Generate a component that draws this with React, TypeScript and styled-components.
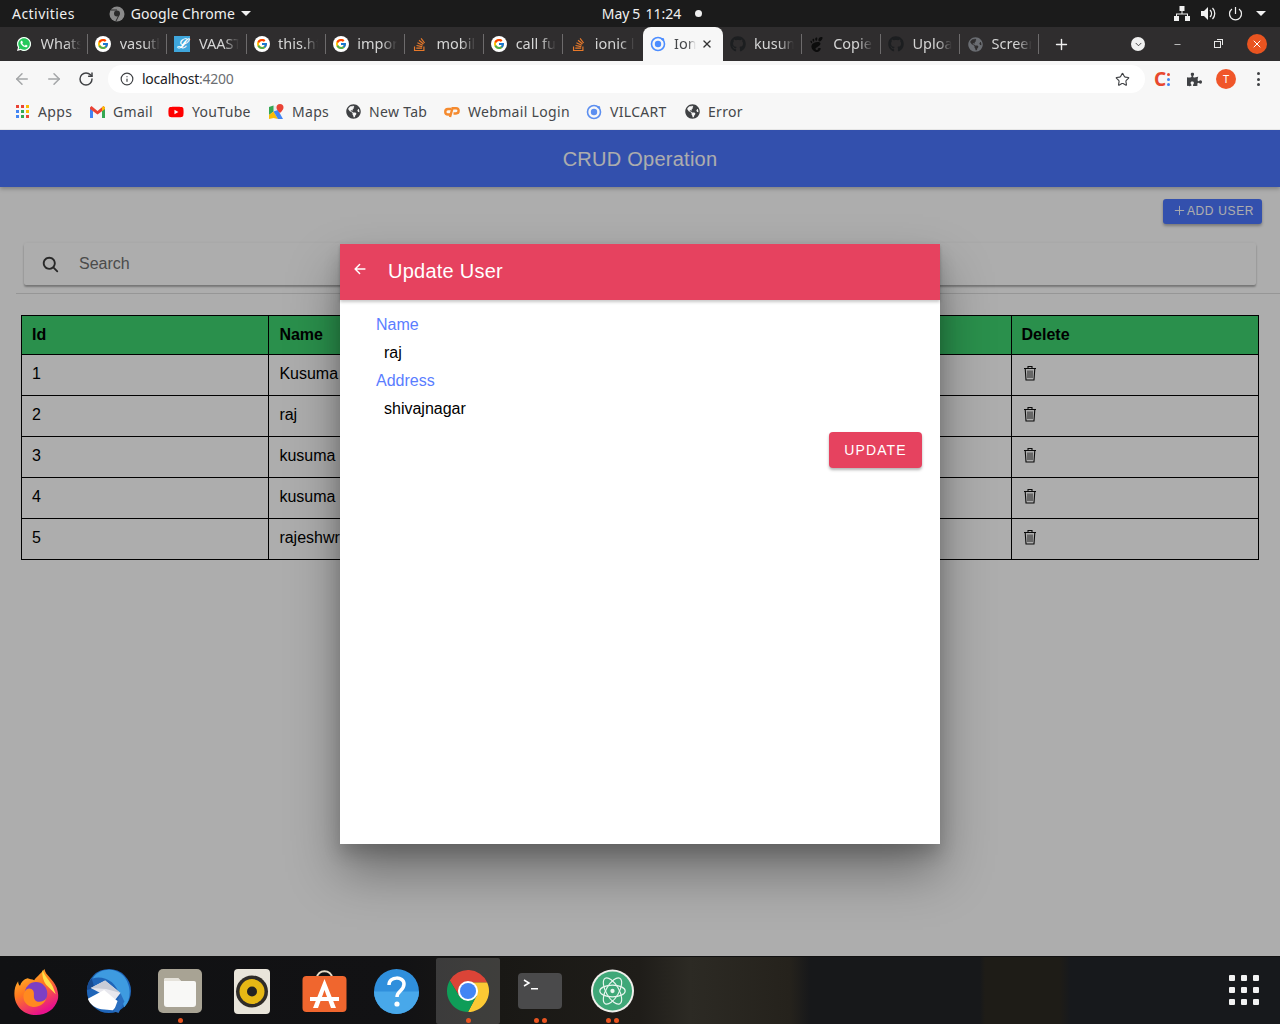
import React from "react";
import styled, { createGlobalStyle } from "styled-components";
import { FcGoogle } from "react-icons/fc";
import { FaStackOverflow, FaGithub, FaGlobeAmericas, FaPuzzlePiece, FaYoutube, FaWhatsapp } from "react-icons/fa";
import { SiGnome } from "react-icons/si";
import { IoArrowBack, IoSearch, IoAdd, IoClose, IoChevronDown } from "react-icons/io5";
import { ArrowLeft, ArrowRight, RotateCw, Info, Star, Plus, X, Minus } from "lucide-react";

const Global = createGlobalStyle`
  html, body { margin: 0; padding: 0; height: 100%; overflow: hidden; }
  body { font-family: "Liberation Sans", Arial, sans-serif; background: #fff; }
  * { box-sizing: border-box; }
`;

const UI = `"Noto Sans", "Open Sans", sans-serif`;

const Shell = styled.div`
  width: 1280px; height: 1024px; display: flex; flex-direction: column; overflow: hidden;
`;

/* ---------- GNOME top bar ---------- */
const TopBar = styled.div`
  height: 27px; background: #1b1b1b; color: #f0f0f0; display: grid;
  grid-template-columns: 1fr auto 1fr; align-items: center; padding: 0 12px;
  font: 14px/27px ${UI}; flex: none;
`;
const TopLeft = styled.div` display: flex; align-items: center; `;
const Activities = styled.span` letter-spacing: 0.45px; `;
const AppName = styled.div` display: flex; align-items: center; gap: 6px; margin-left: 34px; letter-spacing: 0.05px; `;
const TopCenter = styled.div` display: flex; align-items: center; gap: 6px; padding-left: 24px; `;
const DateText = styled.span` word-spacing: -1px; `;
const RecDot = styled.span` width: 7px; height: 7px; border-radius: 50%; background: #f0f0f0; margin-left: 8px; `;
const TopRight = styled.div` display: flex; justify-content: flex-end; align-items: center; gap: 11px; padding-right: 2px; `;
const Caret = styled.span`
  width: 0; height: 0; border-left: 5px solid transparent; border-right: 5px solid transparent;
  border-top: 5px solid #f0f0f0; margin-left: ${p => p.$ml ?? 0}px;
`;

/* ---------- Chrome tab strip ---------- */
const TabStrip = styled.div`
  height: 34px; background: #2f2d2e; display: flex; align-items: stretch; padding-left: 9px; flex: none;
  font: 14.5px/32px ${UI};
`;
const Tab = styled.div`
  width: ${p => (p.$active ? 80 : 79.2)}px; position: relative; display: flex; align-items: center;
  padding-left: 7px; gap: 8.5px; color: ${p => (p.$active ? "#45474a" : "#d5d5d5")};
  background: ${p => (p.$active ? "#f7f7f7" : "transparent")};
  border-radius: ${p => (p.$active ? "8px 8px 0 0" : "0")};
  &::after {
    content: ""; position: absolute; right: 0; top: 7px; height: 20px; width: 1px;
    background: ${p => (p.$sep ? "#6d6b6c" : "transparent")};
  }
`;
const TabIcon = styled.span`
  width: 16px; height: 16px; flex: none; display: flex; align-items: center; justify-content: center;
  border-radius: ${p => (p.$round ? "50%" : "0")}; background: ${p => p.$bg ?? "transparent"};
  color: ${p => p.$fg ?? "inherit"};
`;
const TabTitle = styled.span`
  flex: none; width: ${p => p.$w ?? 40}px; height: 32px; overflow: hidden; white-space: nowrap; margin-top: -2px;
  -webkit-mask-image: linear-gradient(90deg, #000 62%, transparent 100%);
  mask-image: linear-gradient(90deg, #000 62%, transparent 100%);
`;
const TabClose = styled.span` position: absolute; right: 9px; top: 10px; display: flex; color: #333; `;
const NewTab = styled.div` width: 44px; display: flex; align-items: center; justify-content: center; color: #f0f0f0; `;
const WinControls = styled.div` display: flex; align-items: center; margin-left: auto; padding-right: 3px; `;
const WinBtn = styled.div` width: 40px; display: flex; justify-content: center; align-items: center; color: #e8e8e8; `;
const CloseDot = styled.span`
  width: 20px; height: 20px; border-radius: 50%; background: #e95420; color: #fff;
  display: flex; align-items: center; justify-content: center;
`;
const ProfileDrop = styled.span`
  width: 14px; height: 14px; border-radius: 50%; background: #f0f0f0; display: flex; align-items: center; justify-content: center; margin-left: 2px;
`;
const RestoreBox = styled.span`
  width: 7px; height: 7px; border: 1px solid #e8e8e8; position: relative; display: block;
  &::after { content: ""; position: absolute; top: -3px; right: -3px; width: 5px; height: 5px; border-top: 1px solid #e8e8e8; border-right: 1px solid #e8e8e8; }
`;

/* ---------- Chrome toolbar ---------- */
const Toolbar = styled.div`
  height: 34px; background: #f7f7f7; display: flex; align-items: center; padding: 2px 0 0 6px; flex: none;
`;
const NavBtn = styled.div`
  width: 32px; display: flex; justify-content: center; color: ${p => (p.$dim ? "#a4a6a8" : "#3f4144")};
`;
const Omnibox = styled.div`
  width: 1037px; height: 28px; margin-left: 6px; border-radius: 14px; background: #fff; display: flex; align-items: center;
  padding: 0 15.5px 0 12px; font: 14px/28px ${UI}; letter-spacing: -0.24px; color: #202124;
`;
const Host = styled.span` margin-left: 8px; `;
const Port = styled.span` color: #6b6e72; `;
const OmniStar = styled.span` margin-left: auto; display: flex; color: #3f4144; `;
const ExtArea = styled.div` display: flex; align-items: center; margin-left: 1px; `;
const ExtBtn = styled.div` width: 32px; display: flex; justify-content: center; align-items: center; color: #3f4144; `;
const Avatar = styled.span`
  width: 20px; height: 20px; border-radius: 50%; background: #f0562a; color: #fff; font: 11px/20px ${UI}; text-align: center;
`;
const CIcon = styled.span`
  color: #e8482f; font: bold 19px/20px ${UI}; display: flex; align-items: center; gap: 1px;
`;
const CDots = styled.span` display: flex; flex-direction: column; gap: 2px; `;
const CDot = styled.i` width: 3px; height: 3px; display: block; border-radius: 50%; background: ${p => p.$c}; `;
const Kebab = styled.span` display: flex; flex-direction: column; gap: 2.5px; `;
const KebabDot = styled.i` display: block; width: 3px; height: 3px; border-radius: 50%; background: #3f4144; `;

/* ---------- Bookmarks ---------- */
const Bookmarks = styled.div`
  height: 35px; background: #f7f7f7; display: flex; align-items: center; padding-left: 14px; flex: none;
  font: 14px/35px ${UI}; letter-spacing: 0.32px; color: #45474a; border-bottom: 1px solid #e6e6e6; padding-bottom: 1px;
`;
const Bookmark = styled.div`
  width: ${p => p.$w}px; display: flex; align-items: center; gap: 8px; white-space: nowrap; flex: none;
`;
const BmIcon = styled.span` width: 16px; height: 16px; display: flex; align-items: center; justify-content: center; flex: none; color: ${p => p.$fg ?? "#3f4144"}; `;
const AppsGrid = styled.span` display: grid; grid-template-columns: repeat(3, 3px); gap: 2px; `;
const AppsDot = styled.i` display: block; width: 3px; height: 3px; background: ${p => p.$c}; `;

/* ---------- Page ---------- */
const Page = styled.div` flex: 1; position: relative; background: #fff; overflow: hidden; `;
const PageHeader = styled.header`
  height: 57px; background: #4c77ff; color: #fff; display: flex; align-items: center; justify-content: center; padding-top: 2px;
  font-size: 20px; letter-spacing: .25px; box-shadow: 0 2px 4px rgba(0,0,0,.25);
`;
const ActionRow = styled.div` display: flex; justify-content: flex-end; padding: 12px 18px 0 0; `;
const AddButton = styled.div`
  width: 99px; height: 25px; border-radius: 3px; background: #4c77ff; color: #fff; display: flex; align-items: center; justify-content: center;
  font-size: 12px; letter-spacing: .65px; box-shadow: 0 2px 3px rgba(0,0,0,.3); padding: 0 0 2px 1px;
`;
const SearchBar = styled.div`
  height: 42px; margin: 19px 24px 0; border-radius: 2px; background: #fff; display: flex; align-items: center; padding-left: 17px; gap: 19px;
  color: #6f6f6f; font-size: 16px; box-shadow: 0 2px 2px rgba(0,0,0,.3), 0 0 3px rgba(0,0,0,.06);
`;
const Divider = styled.hr` margin: 8px 0 0 16px; height: 1px; border: 0; background: #dedede; `;
const Table = styled.table`
  margin: 21px 0 0 21px; width: 1238px; table-layout: fixed; border-collapse: collapse; font-size: 16px; color: #000;
`;
const Th = styled.th`
  height: 39px; background: #3fd470; border: 1px solid #000; padding: 0 10px; text-align: left; font-weight: 700;
`;
const Td = styled.td` height: 41px; border: 1px solid #000; padding: 0 10px 2px; text-align: left; `;
const TrashBtn = styled.span` display: inline-flex; padding: 1px 0 0 1px; `;

const Backdrop = styled.div`
  position: absolute; inset: 0; background: rgba(0,0,0,.32); display: flex; align-items: center; justify-content: center; padding-top: 2px;
`;
const Modal = styled.div`
  width: 600px; height: 600px; background: #fff; display: flex; flex-direction: column;
  box-shadow: 0 28px 48px rgba(0,0,0,.36), 0 10px 16px rgba(0,0,0,.16);
`;
const ModalHeader = styled.div`
  height: 56px; background: #e6425f; color: #fff; display: flex; align-items: center; padding: 0 0 2px 12px;
  font-size: 20px; letter-spacing: .25px; box-shadow: 0 2px 3px rgba(0,0,0,.22); flex: none;
`;
const BackBtn = styled.span` width: 36px; display: flex; margin-top: -5px; `;
const ModalBody = styled.div` padding: 11px 18px 0 36px; display: flex; flex-direction: column; `;
const Label = styled.div` height: 28px; line-height: 28px; color: #5a7dff; font-size: 16px; `;
const Value = styled.div` height: 28px; line-height: 28px; padding-left: 8px; color: #000; font-size: 16px; `;
const UpdateButton = styled.div`
  width: 93px; height: 36px; margin: 9px 0 0 auto; border-radius: 4px; background: #e6425f; color: #fff; display: flex; align-items: center; justify-content: center;
  font-size: 14px; letter-spacing: 1.1px; box-shadow: 0 2px 3px rgba(0,0,0,.3);
`;

/* ---------- Dock ---------- */
const Dock = styled.div`
  height: 68px; flex: none; display: flex; align-items: flex-start; padding-top: 1px;
  border-top: 1px solid #111;
  background: linear-gradient(90deg, #101113 0, #121214 400px, #191815 500px, #1f1d19 640px, #2c2a24 690px, #25221c 790px, #17181a 810px, #17181a 980px, #1e1c17 985px, #1e1c17 1060px, #17191c 1070px, #17191c 100%);
`;
const DockItem = styled.div`
  width: 72px; height: 66px; position: relative; display: flex; align-items: center; justify-content: center; flex: none;
  &::before {
    content: ""; position: absolute; left: 4px; right: 4px; top: 0; bottom: 0; border-radius: 2px;
    background: ${p => (p.$active ? "rgba(255,255,255,.17)" : "transparent")};
  }
  & > svg { position: relative; }
`;
const Running = styled.div` position: absolute; bottom: 1px; left: 0; right: 0; display: flex; justify-content: center; gap: 3px; `;
const RunDot = styled.i` width: 5px; height: 5px; border-radius: 50%; background: #e95420; display: block; `;
const GridBtn = styled.div`
  margin: 17px 21px 0 auto; display: grid; grid-template-columns: repeat(3, 6px); gap: 6px;
`;
const GridDot = styled.i` width: 6px; height: 6px; border-radius: 1px; background: #f2f2f2; display: block; `;

/* ---------- Drawn icons ---------- */
const Trash = () => (
  <svg width="14" height="16" viewBox="0 0 14 16" fill="none" stroke="#111" strokeWidth="1.100">
    <path d="M1 3.500h12M5 3.500V1.500h4v2" />
    <path d="M2.200 3.500 3 15h8l.8-11.500" />
    <path d="M5 5.500v7.500M7 5.500v7.500M9 5.500v7.500" stroke="#444" />
  </svg>
);
const CPanel = () => (
  <svg width="16" height="12" viewBox="0 0 16 12" fill="none" stroke="#f58a2e" strokeWidth="2.400">
    <path d="M7 3H4a2.500 2.500 0 0 0 0 5.500h2" />
    <path d="M6 11 8.500 2.200H12a2.500 2.500 0 0 1 0 5.300H9.500" />
  </svg>
);
const ChromeLogo = ({ size = 46 }: { size?: number }) => (
  <svg width={size} height={size} viewBox="0 0 48 48">
    <path d="M24 15H44A22 22 0 0 0 5 13L16 31Z" fill="#db4437" />
    <path d="M44 15A22 22 0 0 1 24 46L33 29 24 15Z" fill="#fcc934" />
    <path d="M5 13A22 22 0 0 0 24 46L33 29 16 31Z" fill="#0f9d58" />
    <circle cx="24" cy="24" r="10.500" fill="#fff" />
    <circle cx="24" cy="24" r="8.400" fill="#4285f4" />
  </svg>
);
const GreyChrome = () => (
  <svg width="16" height="16" viewBox="0 0 16 16">
    <circle cx="8" cy="8" r="7.500" fill="#8a8a8a" />
    <circle cx="8" cy="7.500" r="3" fill="#2b2b2b" />
    <path d="M9.500 10 7 15M2 4h6" stroke="#2b2b2b" strokeWidth="1" />
  </svg>
);
const Network = () => (
  <svg width="16" height="15" viewBox="0 0 16 15" fill="#f0f0f0">
    <rect x="5.500" y="0" width="5" height="5" />
    <rect x="0" y="10" width="5" height="5" />
    <rect x="11" y="10" width="5" height="5" />
    <path d="M7.500 5h1v2.500H14V10h-1V8.500H3V10H2V7.500h5.500z" />
  </svg>
);
const Volume = () => (
  <svg width="16" height="15" viewBox="0 0 16 15" fill="#f0f0f0">
    <path d="M0 5h3l4-4v13l-4-4H0z" />
    <path d="M9 4c2 2 2 5 0 7M11.500 2c3 3 3 8 0 11" stroke="#f0f0f0" strokeWidth="1.300" fill="none" />
  </svg>
);
const Power = () => (
  <svg width="15" height="15" viewBox="0 0 15 15" fill="none" stroke="#f0f0f0" strokeWidth="1.200">
    <path d="M7.500 1v7" />
    <path d="M4 3a6 6 0 1 0 7 0" />
  </svg>
);
const Gmail = () => (
  <svg width="15" height="12" viewBox="0 0 15 12">
    <path d="M0 2v10h3V5z" fill="#4285f4" />
    <path d="M15 2v10h-3V5z" fill="#34a853" />
    <path d="M0 1.500 1.500 0 7.500 5 13.500 0 15 1.500V3L7.500 8.500 0 3z" fill="#ea4335" />
    <path d="M12 5 15 3V1.500L13.500 0 12 1.300z" fill="#fbbc04" />
  </svg>
);
const Maps = () => (
  <svg width="16" height="16" viewBox="0 0 16 16">
    <path d="M1 3 5.500 1.500 10 3l2 12-6.500-1L1 15z" fill="#e8eaed" />
    <path d="M1 3 5.500 1.500v6L1 11z" fill="#34a853" />
    <path d="M1 11 5.500 7.500 10 15 5.500 14 1 15z" fill="#fbbc04" />
    <path d="M5.500 7.500 10 6l5 9-5 0z" fill="#4285f4" />
    <path d="M12 0a3.500 3.500 0 0 0-3.500 3.500C8.500 6 12 9 12 9s3.500-3 3.500-5.500A3.500 3.500 0 0 0 12 0z" fill="#ea4335" />
  </svg>
);
const IonicMark = ({ color = "#4c8dff", size = 16 }: { color?: string; size?: number }) => (
  <svg width={size} height={size} viewBox="0 0 16 16" fill="none">
    <circle cx="8" cy="8" r="6.500" stroke={color} strokeWidth="1.600" />
    <circle cx="8" cy="8" r="3.200" fill={color} />
    <circle cx="12.800" cy="3.200" r="1.300" fill={color} />
  </svg>
);
const Firefox = () => (
  <svg width="46" height="47" viewBox="0 0 48 50">
    <defs>
      <linearGradient id="ff" x1="0" y1="0" x2="0.500" y2="1">
        <stop offset="0" stopColor="#ffcb2e" />
        <stop offset="0.500" stopColor="#ff7a1f" />
        <stop offset="1" stopColor="#e8128c" />
      </linearGradient>
    </defs>
    <path d="M33 1c1 7 9 10 13 20 2 6 2 10 1 13-3 10-12 16-23 16C11 50 1 41 1 27c0-4 1-9 4-13 0 3 1 4 2 5 1-4 4-7 8-8 2 1 5 1 7 2 2-3 6-6 11-12z" fill="url(#ff)" />
    <path d="M31 2c2 7 8 11 11 18l3 8-10-10c-3-4-5-10-4-16z" fill="#ffe14a" />
    <circle cx="24" cy="27" r="12" fill="#7d3fc4" />
    <path d="M12 25c2-4 7-4 9-1 2 4-1 8 3 11 3 2 9 1 11-3-2 8-12 12-19 8-5-3-7-10-4-15z" fill="#ff8a1f" />
  </svg>
);
const Thunderbird = () => (
  <svg width="48" height="48" viewBox="0 0 48 50">
    <circle cx="25" cy="25" r="23" fill="#1f65b8" />
    <path d="M8 12C14 2 30-1 40 9c8 9 9 24 1 33-3-8-6-20-13-26C22 11 14 10 8 12z" fill="#3e9be0" />
    <path d="M2 24c0-5 2-9 5-12l3 10z" fill="#174b91" />
    <path d="M6 22 21 14l16 13-6 8z" fill="#e8e8ee" />
    <path d="M3 33 20 24l12 10 5 3-8 8-12-1C11 43 5 39 3 33z" fill="#fff" />
    <path d="M6 22 21 14l16 13-15-4z" fill="#c9ccd6" />
    <path d="M37 27l4 9-6 12-5-2z" fill="#2a6fc0" />
  </svg>
);
const Files = () => (
  <svg width="44" height="44" viewBox="0 0 44 44">
    <rect x="0" y="0" width="44" height="44" rx="5" fill="#a8a394" />
    <path d="M6 11a2 2 0 0 1 2-2h12l3 3h13a2 2 0 0 1 2 2v21a3 3 0 0 1-3 3H9a3 3 0 0 1-3-3z" fill="#f8f8f6" />
    <path d="M6 11a2 2 0 0 1 2-2h12l3 3H6z" fill="#e5e2da" />
  </svg>
);
const Rhythmbox = () => (
  <svg width="36" height="45" viewBox="0 0 36 45">
    <rect width="36" height="45" rx="4" fill="#e9e5da" />
    <circle cx="18" cy="22.500" r="16" fill="#2f2c28" />
    <circle cx="18" cy="22.500" r="12.500" fill="#e6b815" />
    <circle cx="18" cy="22.500" r="5" fill="#222" />
  </svg>
);
const Software = () => (
  <svg width="45" height="42" viewBox="0 0 45 42">
    <path d="M15 8c0-9 15-9 15 0" fill="none" stroke="#e8dcc8" strokeWidth="2" />
    <rect x=".5" y="6" width="44" height="36" rx="4" fill="#f0662e" />
    <path d="M22.500 9 11 38h5l6.500-18L29 38h5z" fill="#fff" />
    <rect x="8" y="27" width="29" height="4" fill="#fff" />
  </svg>
);
const Help = () => (
  <svg width="45" height="45" viewBox="0 0 45 45">
    <circle cx="22.500" cy="22.500" r="22.500" fill="#2f8fdc" />
    <path d="M0 22.500a22.500 22.500 0 0 0 45 0z" fill="#48a8ea" />
    <path d="M15 16c0-9 15-9 15-1 0 7-7 7-7 13" fill="none" stroke="#fff" strokeWidth="3.500" />
    <circle cx="23" cy="35" r="2.600" fill="#fff" />
  </svg>
);
const Terminal = () => (
  <svg width="44" height="36" viewBox="0 0 44 36">
    <rect width="44" height="36" rx="4" fill="#4a4a4b" />
    <path d="M6 7l5 3-5 3" fill="none" stroke="#fff" strokeWidth="1.500" />
    <rect x="13" y="15" width="7" height="1.500" fill="#fff" />
  </svg>
);
const Atom = () => (
  <svg width="43" height="44" viewBox="0 0 44 44">
    <circle cx="22" cy="22" r="22" fill="#f0f0ec" />
    <circle cx="22" cy="22" r="20" fill="#3fa878" />
    <g fill="none" stroke="#e9f6ef" strokeWidth="1.200">
      <ellipse cx="22" cy="22" rx="15" ry="6.500" transform="rotate(60 22 22)" />
      <ellipse cx="22" cy="22" rx="15" ry="6.500" transform="rotate(-60 22 22)" />
      <ellipse cx="22" cy="22" rx="13" ry="6" />
    </g>
    <circle cx="22" cy="22" r="2.200" fill="#e9f6ef" />
  </svg>
);

const WhatsappIcon = styled.span`
  width: 16px; height: 16px; flex: none; display: flex; align-items: center; justify-content: center; color: #fff;
  background: radial-gradient(circle, #25c85a 0 6.6px, transparent 7px);
`;
const Google = () => (
  <TabIcon $round $bg="#fff"><FcGoogle size={12} /></TabIcon>
);
const SO = () => (
  <TabIcon $fg="#e8792a"><FaStackOverflow size={15} /></TabIcon>
);
const Vaast = styled.span`
  width: 16px; height: 16px; background: #3fa6dc; color: #fff; font: italic bold 13px/16px "Liberation Serif", serif; text-align: center; display: block;
`;

const rows = [
  [1, "Kusuma", "hyderabad"],
  [2, "raj", "shivajnagar"],
  [3, "kusuma", "bidar"],
  [4, "kusuma", "bidar"],
  [5, "rajeshwri", "bidar"],
] as const;

const bookmarks = [
  { w: 75, name: "Apps", icon: <AppsGrid>{["#ea4335","#ea4335","#fbbc04","#4285f4","#34a853","#fbbc04","#4285f4","#34a853","#ea4335"].map((c, i) => <AppsDot key={i} $c={c} />)}</AppsGrid> },
  { w: 79, name: "Gmail", icon: <Gmail /> },
  { w: 100, name: "YouTube", icon: <FaYoutube size={16} color="#f00" /> },
  { w: 77, name: "Maps", icon: <Maps /> },
  { w: 99, name: "New Tab", icon: <FaGlobeAmericas size={15} color="#3f4144" /> },
  { w: 142, name: "Webmail Login", icon: <CPanel /> },
  { w: 98, name: "VILCART", icon: <IonicMark color="#5c8ff0" /> },
  { w: 70, name: "Error", icon: <FaGlobeAmericas size={15} color="#3f4144" /> },
];

export default function App() {
  return (
    <Shell>
      <Global />
      <TopBar>
        <TopLeft>
          <Activities>Activities</Activities>
          <AppName><GreyChrome />Google Chrome<Caret $ml={0} /></AppName>
        </TopLeft>
        <TopCenter><DateText>May 5&nbsp;&nbsp;11:24</DateText><RecDot /></TopCenter>
        <TopRight><Network /><Volume /><Power /><Caret $ml={2} /></TopRight>
      </TopBar>

      <TabStrip>
        <Tab $sep><WhatsappIcon><FaWhatsapp size={16} /></WhatsappIcon><TabTitle>WhatsApp</TabTitle></Tab>
        <Tab $sep><Google /><TabTitle>vasuthara</TabTitle></Tab>
        <Tab $sep><TabIcon><Vaast>ℒ</Vaast></TabIcon><TabTitle>VAAST</TabTitle></Tab>
        <Tab $sep><Google /><TabTitle>this.http</TabTitle></Tab>
        <Tab $sep><Google /><TabTitle>import</TabTitle></Tab>
        <Tab $sep><SO /><TabTitle>mobile</TabTitle></Tab>
        <Tab $sep><Google /><TabTitle>call fun</TabTitle></Tab>
        <Tab><SO /><TabTitle>ionic list</TabTitle></Tab>
        <Tab $active>
          <TabIcon><IonicMark /></TabIcon>
          <TabTitle $w={22}>Ionic</TabTitle>
          <TabClose><IoClose size={14} /></TabClose>
        </Tab>
        <Tab $sep><TabIcon $fg="#1c1e20"><FaGithub size={16} /></TabIcon><TabTitle>kusuma</TabTitle></Tab>
        <Tab $sep><TabIcon $fg="#0c0c0c"><SiGnome size={15} /></TabIcon><TabTitle>Copied</TabTitle></Tab>
        <Tab $sep><TabIcon $fg="#1c1e20"><FaGithub size={16} /></TabIcon><TabTitle>Upload</TabTitle></Tab>
        <Tab $sep><TabIcon $fg="#6a6d72"><FaGlobeAmericas size={15} /></TabIcon><TabTitle>Screen</TabTitle></Tab>
        <NewTab><Plus size={17} strokeWidth={2} /></NewTab>
        <WinControls>
          <WinBtn><ProfileDrop><IoChevronDown size={9} color="#2f2d2e" /></ProfileDrop></WinBtn>
          <WinBtn><Minus size={9} /></WinBtn>
          <WinBtn><RestoreBox /></WinBtn>
          <WinBtn><CloseDot><X size={12} strokeWidth={2} /></CloseDot></WinBtn>
        </WinControls>
      </TabStrip>

      <Toolbar>
        <NavBtn $dim><ArrowLeft size={18} /></NavBtn>
        <NavBtn $dim><ArrowRight size={18} /></NavBtn>
        <NavBtn><RotateCw size={16} strokeWidth={2.200} /></NavBtn>
        <Omnibox>
          <Info size={14} color="#3f4144" />
          <Host>localhost<Port>:4200</Port></Host>
          <OmniStar><Star size={15} strokeWidth={1.800} /></OmniStar>
        </Omnibox>
        <ExtArea>
          <ExtBtn><CIcon>C<CDots><CDot $c="#e8482f" /><CDot $c="#4285f4" /><CDot $c="#4285f4" /></CDots></CIcon></ExtBtn>
          <ExtBtn><FaPuzzlePiece size={15} /></ExtBtn>
          <ExtBtn><Avatar>T</Avatar></ExtBtn>
          <ExtBtn><Kebab><KebabDot /><KebabDot /><KebabDot /></Kebab></ExtBtn>
        </ExtArea>
      </Toolbar>

      <Bookmarks>
        {bookmarks.map(b => (
          <Bookmark key={b.name} $w={b.w}><BmIcon>{b.icon}</BmIcon>{b.name}</Bookmark>
        ))}
      </Bookmarks>

      <Page>
        <PageHeader>CRUD Operation</PageHeader>
        <ActionRow><AddButton><IoAdd size={15} />ADD USER</AddButton></ActionRow>
        <SearchBar><IoSearch size={19} color="#3c3c3c" />Search</SearchBar>
        <Divider />
        <Table>
          <thead>
            <tr><Th>Id</Th><Th>Name</Th><Th>Address</Th><Th>Edit</Th><Th>Delete</Th></tr>
          </thead>
          <tbody>
            {rows.map(r => (
              <tr key={r[0]}>
                <Td>{r[0]}</Td><Td>{r[1]}</Td><Td>{r[2]}</Td><Td />
                <Td><TrashBtn><Trash /></TrashBtn></Td>
              </tr>
            ))}
          </tbody>
        </Table>
        <Backdrop>
          <Modal>
            <ModalHeader>
              <BackBtn><IoArrowBack size={16} /></BackBtn>
              Update User
            </ModalHeader>
            <ModalBody>
              <Label>Name</Label>
              <Value>raj</Value>
              <Label>Address</Label>
              <Value>shivajnagar</Value>
              <UpdateButton>UPDATE</UpdateButton>
            </ModalBody>
          </Modal>
        </Backdrop>
      </Page>

      <Dock>
        <DockItem><Firefox /></DockItem>
        <DockItem><Thunderbird /></DockItem>
        <DockItem><Files /><Running><RunDot /></Running></DockItem>
        <DockItem><Rhythmbox /></DockItem>
        <DockItem><Software /></DockItem>
        <DockItem><Help /></DockItem>
        <DockItem $active><ChromeLogo /><Running><RunDot /></Running></DockItem>
        <DockItem><Terminal /><Running><RunDot /><RunDot /></Running></DockItem>
        <DockItem><Atom /><Running><RunDot /><RunDot /></Running></DockItem>
        <GridBtn>{Array.from({ length: 9 }).map((_, i) => <GridDot key={i} />)}</GridBtn>
      </Dock>
    </Shell>
  );
}
